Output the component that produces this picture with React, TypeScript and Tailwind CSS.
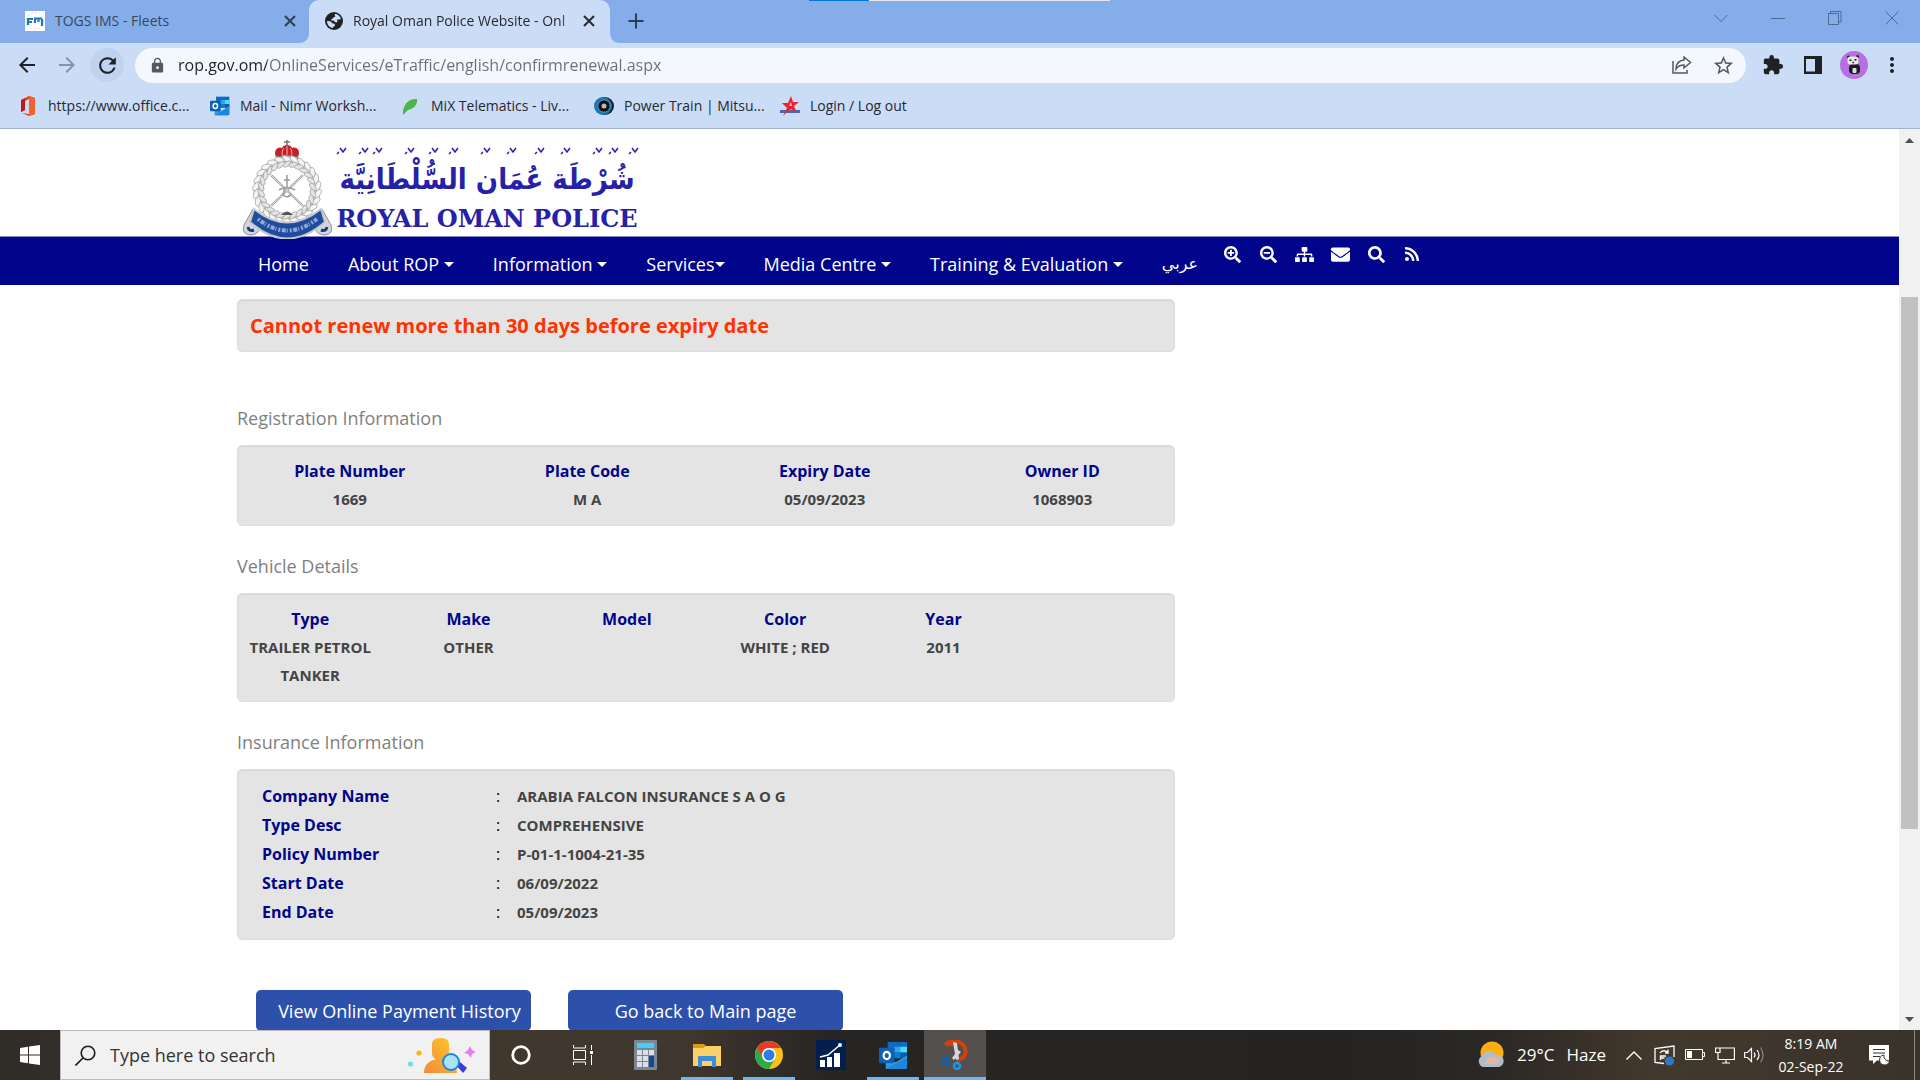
import type { ReactNode } from "react";
import {
  MdArrowBack,
  MdArrowForward,
  MdExtension,
  MdLock,
  MdMoreVert,
  MdRefresh,
  MdStarBorder,
} from "react-icons/md";
import { FaEnvelope, FaRss, FaSearch, FaSearchMinus, FaSearchPlus, FaSitemap } from "react-icons/fa";

const bookmarks = [
  { label: "https://www.office.c...", icon: <OfficeIcon />, width: "w-[192px]" },
  { label: "Mail - Nimr Worksh...", icon: <OutlookIcon size={20} />, width: "w-[191px]" },
  { label: "MiX Telematics - Liv...", icon: <LeafIcon />, width: "w-[193px]" },
  { label: "Power Train | Mitsu...", icon: <TyreIcon />, width: "w-[186px]" },
  { label: "Login / Log out", icon: <StarLogo />, width: "w-[150px]" },
];

const menu = [
  { label: "Home", caret: false },
  { label: "About ROP ", caret: true },
  { label: "Information ", caret: true },
  { label: "Services", caret: true },
  { label: "Media Centre ", caret: true },
  { label: "Training & Evaluation ", caret: true },
];

const tools = [
  { label: "Zoom in", icon: <FaSearchPlus size={17} /> },
  { label: "Zoom out", icon: <FaSearchMinus size={17} /> },
  { label: "Site map", icon: <FaSitemap size={19} /> },
  { label: "Contact", icon: <FaEnvelope size={19} /> },
  { label: "Search", icon: <FaSearch size={17} /> },
  { label: "RSS", icon: <FaRss size={16} /> },
];

const registration = [
  { label: "Plate Number", value: "1669" },
  { label: "Plate Code", value: "M A" },
  { label: "Expiry Date", value: "05/09/2023" },
  { label: "Owner ID", value: "1068903" },
];

const vehicle = [
  { label: "Type", value: "TRAILER PETROL TANKER" },
  { label: "Make", value: "OTHER" },
  { label: "Model", value: "" },
  { label: "Color", value: "WHITE ; RED" },
  { label: "Year", value: "2011" },
  { label: "", value: "" },
];

const insurance = [
  { label: "Company Name", value: "ARABIA FALCON INSURANCE S A O G" },
  { label: "Type Desc", value: "COMPREHENSIVE" },
  { label: "Policy Number", value: "P-01-1-1004-21-35" },
  { label: "Start Date", value: "06/09/2022" },
  { label: "End Date", value: "05/09/2023" },
];

export default function App() {
  return (
    <div className="flex h-screen flex-col overflow-hidden bg-white font-['Open_Sans','Noto_Sans',sans-serif]">
      <TabStrip />
      <Toolbar />
      <BookmarksBar />
      <div className="flex min-h-0 flex-1">
        <div className="min-w-0 flex-1 overflow-hidden">
          <SiteHeader />
          <RenewalPage />
        </div>
        <Scrollbar />
      </div>
      <Taskbar />
    </div>
  );
}

/* ---------- browser ---------- */

function TabStrip() {
  return (
    <header className="relative flex h-[43px] shrink-0 bg-[#85ade9]">
      <div className="flex w-[309px] items-center pb-[2px] pl-[25px] pr-3 text-sm text-[#35485f]">
        <FleetIcon />
        <span className="ml-[10px] flex-1">TOGS IMS - Fleets</span>
        <button aria-label="Close tab" className="text-[#2c3e55]">
          <CrossIcon />
        </button>
      </div>
      <div className="relative flex w-[301px] items-center rounded-t-[10px] bg-[#cbdcf6] pb-[2px] pl-4 pr-[14px] text-sm text-[#26292e]">
        <TabFoot className="absolute -left-[10px] bottom-0" />
        <TabFoot className="absolute -right-[10px] bottom-0 -scale-x-100" />
        <GlobeIcon />
        <span className="ml-[10px] min-w-0 flex-1 whitespace-nowrap mask-r-from-90%">
          Royal Oman Police Website - Onl
        </span>
        <button aria-label="Close tab">
          <CrossIcon />
        </button>
      </div>
      <button aria-label="New tab" className="ml-[18px] pb-[2px] text-[#2b3d54]">
        <svg width="16" height="16" viewBox="0 0 16 16" stroke="currentColor" strokeWidth="2">
          <path d="M8 0.5v15M0.5 8h15" />
        </svg>
      </button>
      <div className="absolute left-[809px] top-0 flex h-px w-[301px] bg-[#e6e6e6]">
        <div className="w-1/5 bg-[#0078d7]" />
      </div>
      <div className="ml-auto flex pb-[7px] text-[#4f6a93]">
        <WindowButton label="Search tabs"><path d="M0.5 4l6.500 6.500l6.500 -6.500" /></WindowButton>
        <WindowButton label="Minimize"><path d="M0 7.500h14" /></WindowButton>
        <WindowButton label="Restore"><path d="M0.500 2.500h10v11h-10zM2.500 2.500v-2h10.500v10.500h-2.500" /></WindowButton>
        <WindowButton label="Close"><path d="M0.500 0.500l13 13M13.500 0.500l-13 13" /></WindowButton>
      </div>
    </header>
  );
}

function WindowButton({ label, children }: { label: string; children: ReactNode }) {
  return (
    <button aria-label={label} className="flex w-[57px] items-center justify-center">
      <svg width="14" height="14" viewBox="0 0 14 14" fill="none" stroke="currentColor">
        {children}
      </svg>
    </button>
  );
}

function TabFoot({ className }: { className: string }) {
  return (
    <svg width="10" height="10" viewBox="0 0 10 10" fill="#cbdcf6" className={className}>
      <path d="M10 0v10H0C6 10 10 6 10 0z" />
    </svg>
  );
}

function CrossIcon() {
  return (
    <svg width="14" height="14" viewBox="0 0 14 14" stroke="currentColor" strokeWidth="2">
      <path d="M2 2l10 10M12 2L2 12" />
    </svg>
  );
}

function Toolbar() {
  return (
    <div className="flex h-[44px] shrink-0 items-center bg-[#cbdcf6] text-[#202124]">
      <button aria-label="Back" className="ml-[7px] flex w-10 justify-center">
        <MdArrowBack size={24} />
      </button>
      <button aria-label="Forward" className="flex w-10 justify-center text-[#8793a8]">
        <MdArrowForward size={24} />
      </button>
      <button
        aria-label="Reload"
        className="ml-[3px] flex size-[34px] items-center justify-center rounded-full bg-[#bfd2ef]"
      >
        <MdRefresh size={25} />
      </button>
      <div className="ml-[11px] flex h-[35px] flex-1 items-center rounded-full bg-[#f4f7fd] pl-[14px] pr-[11px] text-[#55585d]">
        <MdLock size={17} />
        <input
          aria-label="Address"
          defaultValue="rop.gov.om/OnlineServices/eTraffic/english/confirmrenewal.aspx"
          className="ml-3 min-w-0 flex-1 bg-[linear-gradient(to_right,#202124_89px,#6b6f75_89px)] bg-clip-text text-base text-transparent outline-none"
        />
        <button aria-label="Share" className="mr-5">
          <svg width="20" height="18" viewBox="0 0 20 18" fill="none" stroke="currentColor" strokeWidth="1.500">
            <path d="M1 5v12h14v-3" />
            <path d="M12 1l6.500 5.500L12 12V9c-4 0-6 1-8 4 0-5 3-8.500 8-9z" />
          </svg>
        </button>
        <button aria-label="Bookmark this page">
          <MdStarBorder size={23} />
        </button>
      </div>
      <button aria-label="Extensions" className="ml-[16px]">
        <MdExtension size={22} />
      </button>
      <button aria-label="Side panel" className="ml-[20px]">
        <svg width="18" height="18" viewBox="0 0 18 18">
          <path fill="currentColor" fillRule="evenodd" d="M0 0h18v18H0zM2 3v12.500h9V3z" />
        </svg>
      </button>
      <button aria-label="Profile" className="ml-[18px]">
        <PandaIcon />
      </button>
      <button aria-label="Menu" className="ml-3 mr-4">
        <MdMoreVert size={24} />
      </button>
    </div>
  );
}

function BookmarksBar() {
  return (
    <nav className="flex h-[42px] shrink-0 items-start border-b border-[#a3b2cf] bg-[#cbdcf6] pl-[18px] pt-[8px] text-sm text-[#26292e]">
      {bookmarks.map((b) => (
        <a key={b.label} href="#" className={`flex h-[22px] shrink-0 items-center gap-[10px] whitespace-nowrap ${b.width}`}>
          {b.icon}
          {b.label}
        </a>
      ))}
    </nav>
  );
}

function Scrollbar() {
  return (
    <div className="flex w-[21px] shrink-0 flex-col items-center bg-[#f1f1f1]">
      <svg width="21" height="21" viewBox="0 0 21 21" fill="#505050">
        <path d="M6 14l4.500-5 4.500 5z" />
      </svg>
      <div className="flex w-[17px] flex-1 flex-col">
        <div className="grow-[147]" />
        <div className="grow-[532] bg-[#c1c1c1]" />
        <div className="grow-[180]" />
      </div>
      <svg width="21" height="21" viewBox="0 0 21 21" fill="#505050">
        <path d="M6 8l4.500 5 4.500-5z" />
      </svg>
    </div>
  );
}

/* ---------- site ---------- */

function SiteHeader() {
  return (
    <header>
      <div className="h-[108px] border-b border-[#8587c4]">
        <div className="mx-auto flex max-w-[1425px] pl-[5px] pt-2">
          <Crest />
          <Wordmark />
        </div>
      </div>
      <div className="bg-[#00058b] text-white">
        <nav className="mx-auto flex h-[48px] max-w-[1425px] items-start pl-[21px]">
          <div className="flex gap-[39px] pt-[13px] text-lg leading-7">
            {menu.map((m) => (
              <button key={m.label} className="flex items-center whitespace-pre">
                {m.label}
                {m.caret && <Caret />}
              </button>
            ))}
            <a href="#" lang="ar" className="font-['DejaVu_Sans',sans-serif] text-base leading-7">
              عربي
            </a>
          </div>
          <div className="ml-4 flex pt-[7px]">
            {tools.map((t) => (
              <button key={t.label} aria-label={t.label} className="flex h-5 w-[36px] items-center justify-center">
                {t.icon}
              </button>
            ))}
          </div>
        </nav>
      </div>
    </header>
  );
}

function Caret() {
  return (
    <svg width="10" height="5" viewBox="0 0 10 5" fill="currentColor">
      <path d="M0 0h10L5 5z" />
    </svg>
  );
}

function RenewalPage() {
  return (
    <main className="mx-auto max-w-[1425px] pt-[14px]">
      <div className="w-2/3 pr-3">
        <Panel>
          <p role="alert" className="px-3 py-[11px] text-xl leading-[29px] font-bold text-[#ff3300]">
            Cannot renew more than 30 days before expiry date
          </p>
        </Panel>
        <div className="h-[26px]" />

        <Heading>Registration Information</Heading>
        <Panel>
          <FieldTable fields={registration} />
        </Panel>

        <Heading>Vehicle Details</Heading>
        <Panel>
          <FieldTable fields={vehicle} />
        </Panel>

        <Heading>Insurance Information</Heading>
        <Panel>
          <table className="mt-[11px] mb-[13px] ml-6 text-left">
            <tbody>
              {insurance.map((row) => (
                <tr key={row.label} className="h-[29px]">
                  <th scope="row" className="w-[234px] text-base leading-7 font-bold text-[#00058b]">{row.label}</th>
                  <td className="w-[21px] text-base leading-7">:</td>
                  <td className="text-[15px] leading-7 font-bold text-[#444]">{row.value}</td>
                </tr>
              ))}
            </tbody>
          </table>
        </Panel>

        <div className="mt-[50px] flex gap-[37px] pl-[19px]">
          <button className="h-[41px] w-[275px] rounded-[5px] bg-[#2d51aa] pl-3 text-lg text-white">
            View Online Payment History
          </button>
          <button className="h-[41px] w-[275px] rounded-[5px] bg-[#2d51aa] text-lg text-white">
            Go back to Main page
          </button>
        </div>
      </div>
    </main>
  );
}

function Panel({ children }: { children: ReactNode }) {
  return (
    <section className="rounded-[5px] border border-[#dedede] bg-[#e4e4e4] shadow-[inset_0_1px_2px_rgba(0,0,0,0.06)]">
      {children}
    </section>
  );
}

function Heading({ children }: { children: ReactNode }) {
  return <h2 className="pt-[26px] pb-[13px] text-lg leading-7 text-[#7f7f7f]">{children}</h2>;
}

function FieldTable({ fields }: { fields: { label: string; value: string }[] }) {
  return (
    <div className="-mx-[7px]">
      <table className="mt-[11px] mb-3 w-full table-fixed text-center">
        <thead>
          <tr>
            {fields.map((f) => (
              <th key={f.label} className="text-base leading-7 font-bold text-[#00058b]">{f.label}</th>
            ))}
          </tr>
        </thead>
        <tbody>
          <tr>
            {fields.map((f) => (
              <td key={f.label} className="px-3 align-top text-[15px] leading-7 font-bold text-[#444]">{f.value}</td>
            ))}
          </tr>
        </tbody>
      </table>
    </div>
  );
}

function Crest() {
  const leaves = Array.from({ length: 26 }, (_, i) => i * (360 / 26));
  return (
    <svg width="92" height="102" viewBox="0 0 92 102" className="relative -mb-[3px] shrink-0">
      {/* crown */}
      <path d="M45 3v6M42 5h6" stroke="#777" strokeWidth="1.500" />
      <path d="M34 20c-3-7 2-11 6-9 1-4 9-4 10 0 5-2 9 3 6 9z" fill="#c8202a" />
      <path d="M41 20c-2-5 0-8 1-9M49 20c2-5 0-8-1-9M45 9v11" stroke="#f3b3b3" fill="none" />
      <path d="M34 20q11-3 22 0v4q-11-3-22 0z" fill="#c9c9c9" stroke="#777" />
      {/* wreath */}
      <circle cx="45" cy="53" r="29" fill="none" stroke="#c6c6c6" strokeWidth="9" />
      {leaves.map((a) => (
        <g key={a} transform={`rotate(${a} 45 53)`}>
          <ellipse cx="45" cy="22" rx="5" ry="2.500" fill="#f5f5f5" stroke="#a2a2a2" strokeWidth="0.700" transform="rotate(28 45 22)" />
          <ellipse cx="45" cy="27" rx="4.500" ry="2.300" fill="#e4e4e4" stroke="#9c9c9c" strokeWidth="0.700" transform="rotate(-28 45 27)" />
        </g>
      ))}
      {/* crossed swords and khanjar */}
      <path d="M29 38l32 31M61 38L29 69" stroke="#999" strokeWidth="2.200" />
      <path d="M29 38l32 31M61 38L29 69" stroke="#eee" strokeWidth="0.900" />
      <path d="M45 38v12M42 43h6M37 53q8-5 16 0M43 50l-2 8q5 4 8-1" stroke="#999" strokeWidth="1.500" fill="none" />
      <path d="M39 78q6-7 12 0z" fill="#555" />
      {/* ribbon */}
      <path d="M11 72L2 88q-3 9 6 10 8 0 10-7M80 72l9 16q3 9-6 10-8 0-10-7" fill="#d4d6da" stroke="#8b8f96" />
      <path d="M12 72q33 27 67 0l4 13q-38 33-75 0z" fill="#1f4c9c" stroke="#c5c8ce" strokeWidth="2" />
      <path d="M16 82q29 23 59 0" fill="none" stroke="#8fa9d6" strokeWidth="4" strokeDasharray="2 1.500 4 1 1 2" />
      <path d="M6 90q1 5 6 3M85 90q-1 5-6 3" stroke="#1b3c80" strokeWidth="3" fill="none" />
    </svg>
  );
}

function Wordmark() {
  return (
    <svg width="310" height="96" viewBox="0 0 310 96" fill="#2521a8" className="shrink-0">
      <text
        x="153"
        y="52"
        textAnchor="middle"
        direction="rtl"
        className="font-['DejaVu_Sans_Condensed','DejaVu_Sans',sans-serif] text-[29px] font-bold"
      >
        شُرْطَة عُمَان السُّلْطَانِيَّة
      </text>
      {/* calligraphic ornaments above the letters */}
      <g fill="none" stroke="#2521a8" strokeWidth="1.500">
        {[6, 28, 42, 74, 98, 118, 150, 176, 204, 230, 262, 278, 298].map((x) => (
          <path key={x} d={`M${x} 11l3 4 3-4M${x - 3} 17l2-2`} />
        ))}
      </g>
      <text x="153" y="90" textAnchor="middle" className="font-['DejaVu_Serif',serif] text-[24px] font-bold">
        ROYAL OMAN POLICE
      </text>
    </svg>
  );
}

/* ---------- taskbar ---------- */

function Taskbar() {
  return (
    <footer className="flex h-[50px] shrink-0 bg-[linear-gradient(to_right,#302c28_0%,#40372d_26%,#3f362d_36%,#272524_43%,#252423_70%,#2b2825_78%,#43382d_86%,#39332c_100%)] text-white">
      <button aria-label="Start" className="flex w-[60px] items-center justify-center">
        <svg width="20" height="20" viewBox="0 0 20 20" fill="#fff">
          <path d="M0 3l8-1.200V9.500H0zM9 1.600L20 0v9.500H9zM0 10.500h8v7.700L0 17zM9 10.500h11V20L9 18.400z" />
        </svg>
      </button>
      <label className="flex w-[430px] items-center border border-[#bcbcbc] bg-[#f1f1f1] pl-[14px] pr-[14px] text-[#1f1f1f]">
        <svg width="21" height="21" viewBox="0 0 21 21" fill="none" stroke="#1a1a1a" strokeWidth="1.600">
          <circle cx="13" cy="8" r="6.800" />
          <path d="M8 13l-7.500 7.500" />
        </svg>
        <input
          aria-label="Search Windows"
          placeholder="Type here to search"
          className="ml-[14px] min-w-0 flex-1 bg-transparent text-lg outline-none placeholder:text-[#333]"
        />
        <SearchHighlight />
      </label>
      <TaskButton label="Cortana">
        <svg width="20" height="20" viewBox="0 0 20 20" fill="none" stroke="#fff" strokeWidth="2.800">
          <circle cx="10" cy="10" r="8.300" />
        </svg>
      </TaskButton>
      <TaskButton label="Task View">
        <svg width="20" height="20" viewBox="0 0 20 20" fill="none" stroke="#fff">
          <path d="M0.500 5.500h12v9h-12zM0.500 0v3h12V0M0.500 20v-3h12v3M18.500 0v5M18.500 10v10" />
          <path d="M17 6h3v3h-3z" fill="#fff" stroke="none" />
        </svg>
      </TaskButton>
      <TaskButton label="Calculator"><CalculatorIcon /></TaskButton>
      <TaskButton label="File Explorer" open><FolderIcon /></TaskButton>
      <TaskButton label="Chrome" open><ChromeIcon /></TaskButton>
      <TaskButton label="Reports"><ChartIcon /></TaskButton>
      <TaskButton label="Outlook" open><OutlookIcon size={29} /></TaskButton>
      <TaskButton label="Snipping Tool" open active><SnipIcon /></TaskButton>
      <Tray />
    </footer>
  );
}

function TaskButton({ label, open, active, children }: { label: string; open?: boolean; active?: boolean; children: ReactNode }) {
  return (
    <button
      aria-label={label}
      className={`relative flex w-[62px] items-center justify-center ${active ? "bg-[#53504d]" : ""}`}
    >
      {children}
      {open && <span className={`absolute bottom-0 h-[3px] bg-[#76b3ec] ${active ? "inset-x-0" : "inset-x-[5px]"}`} />}
    </button>
  );
}

function Tray() {
  return (
    <div className="ml-auto flex items-center">
      <button className="flex items-center gap-3 text-[17px]">
        <svg width="28" height="28" viewBox="0 0 28 28">
          <circle cx="15" cy="12" r="11.500" fill="#fcae12" />
          <path d="M6 26a6 6 0 0 1-1-11 8 8 0 0 1 14-1 6 6 0 0 1 3 12z" fill="#aebccb" />
          <path d="M8 22a8 8 0 0 1 15-2l-3 3H9z" fill="#e6b79a" />
        </svg>
        <span className="whitespace-pre">29°C</span>
        <span>Haze</span>
      </button>
      <button aria-label="Show hidden icons" className="ml-[20px]">
        <svg width="16" height="9" viewBox="0 0 16 9" fill="none" stroke="#fff" strokeWidth="1.400">
          <path d="M0.500 8.500L8 1l7.500 7.500" />
        </svg>
      </button>
      <button aria-label="Updates" className="ml-[12px]">
        <svg width="21" height="21" viewBox="0 0 21 21" fill="none" stroke="#fff" strokeWidth="1.300">
          <path d="M20 12V1L1 3.500v14L10 18.500" />
          <path d="M6 8c2-3 6-3 8 0M14 4.500V8h-3M12 11H6.500v4M6.500 13h4" />
          <circle cx="15.500" cy="16" r="4.500" fill="#2f78c8" stroke="none" />
        </svg>
      </button>
      <button aria-label="Battery" className="ml-[10px]">
        <svg width="20" height="12" viewBox="0 0 20 12" fill="none" stroke="#fff">
          <path d="M0.500 0.500h17v10h-17zM17.500 3.500h2v4h-2" />
          <path d="M2 2h5v7H2z" fill="#fff" stroke="none" />
        </svg>
      </button>
      <button aria-label="Network" className="ml-[10px]">
        <svg width="20" height="17" viewBox="0 0 20 17" fill="none" stroke="#fff" strokeWidth="1.200">
          <path d="M5 1h14.400v11.500H3V7M11 12.500v3.500M7 16h8M0.500 1h4.500v4.500h-4.500zM3 5.500v3" />
        </svg>
      </button>
      <button aria-label="Volume" className="ml-[9px]">
        <svg width="21" height="18" viewBox="0 0 21 18" fill="none" stroke="#fff" strokeWidth="1.200">
          <path d="M0.700 6.500h2.800L7.500 2.500v13L3.500 11.500H0.700zM10 6.500q2 2.500 0 5M13 4q4 5 0 10" />
          <path d="M16.500 1.500q5 7.500 0 15" stroke="#8a857f" />
        </svg>
      </button>
      <button className="ml-[9px] w-[74px] text-center text-sm leading-[23px] whitespace-nowrap">
        8:19 AM
        <br />
        02-Sep-22
      </button>
      <button aria-label="Notifications" className="ml-[21px]">
        <svg width="21" height="20" viewBox="0 0 21 20">
          <path d="M0 0h20v15.500H8L4 19v-3.500H0z" fill="#fff" />
          <path d="M4 4.500h12M4 8h12M4 11.500h7" stroke="#3a332c" strokeWidth="1.200" />
          <path d="M15 10a5 5 0 1 0 5.500 6A5 5 0 0 1 15 10z" fill="#fff" stroke="#3a332c" />
        </svg>
      </button>
      <div className="ml-[24px] mr-[5px] h-[50px] w-px bg-[#8b8781]" />
    </div>
  );
}

/* ---------- icons ---------- */

function FleetIcon() {
  return (
    <svg width="20" height="20" viewBox="0 0 20 20">
      <path fill="#fff" d="M0 0h20v20H0z" />
      <circle cx="10" cy="10" r="8.500" fill="none" stroke="#d5dce2" strokeDasharray="2 2" />
      <path d="M3 14V8h5M3 11h4M10 12V7.500h7M13.500 8v3M17 8v7" fill="none" stroke="#1d7bbd" strokeWidth="2.200" />
    </svg>
  );
}

function GlobeIcon() {
  return (
    <svg width="18" height="18" viewBox="0 0 18 18" className="shrink-0">
      <circle cx="9" cy="9" r="9" fill="#202124" />
      <path d="M10 2c3 0 5 2 6 5-2 1-4 0-4 1s1 1 0 2-2 0-3-1-3 0-3-1 2-1 2-2 1-1 2-1-1-2 0-3zM2 9c2 0 4 0 5 2 1 1 3 0 3 2s-2 1-2 3c-3 0-6-3-6-7z" fill="#cbdcf6" />
    </svg>
  );
}

function PandaIcon() {
  return (
    <svg width="28" height="28" viewBox="0 0 28 28">
      <circle cx="14" cy="14" r="14" fill="#b86fe3" />
      <circle cx="8.500" cy="6" r="1.500" fill="#222" />
      <circle cx="17.500" cy="5.500" r="1.500" fill="#222" />
      <rect x="9" y="13" width="11" height="10" rx="4" fill="#1c1c1c" />
      <rect x="12.500" y="17" width="4" height="5" rx="1" fill="#ddd" />
      <rect x="7.500" y="5.500" width="11" height="8" rx="3" fill="#e9e9e2" />
      <path d="M9.500 9l2 .5M14.500 9l2-.5M12.500 11.500h1.500" stroke="#222" strokeWidth="1.300" />
    </svg>
  );
}

function OfficeIcon() {
  return (
    <svg width="20" height="20" viewBox="0 0 20 20">
      <path d="M11 0l6 2v16l-6 2-7-3 7 1V3L7 5v9l-4 2V4z" fill="#e2401b" />
      <path d="M11 0l6 2v16l-6 2z" fill="#f0642c" />
      <path d="M3 4l4-1.500V14l-4 2z" fill="#c4161f" />
    </svg>
  );
}

function OutlookIcon({ size }: { size: number }) {
  return (
    <svg width={size} height={size} viewBox="0 0 30 30">
      <path d="M9 1h20v16H9z" fill="#0f6cbd" />
      <path d="M16 6h6v6h-6z" fill="#28a8ea" />
      <path d="M22 6h7v6h-7z" fill="#50d9ff" />
      <path d="M9 12h7v6H9zM22 12h7v6h-7z" fill="#0a5ca8" />
      <path d="M16 12h6v6h-6z" fill="#0f7bd0" />
      <path d="M29 15v12a2 2 0 0 1-2 2H7V17l10 5z" fill="#2b9ce8" />
      <path d="M7 29l22-12v10a2 2 0 0 1-2 2z" fill="#1b86da" />
      <rect y="7" width="16" height="16" rx="1.500" fill="#0e62b5" />
      <ellipse cx="8" cy="15" rx="3.300" ry="3.800" fill="none" stroke="#fff" strokeWidth="2.200" />
    </svg>
  );
}

function LeafIcon() {
  return (
    <svg width="20" height="20" viewBox="0 0 20 20">
      <path d="M2 19C1 10 7 2 16 3c1 6-4 10-9 11z" fill="#4cb648" />
    </svg>
  );
}

function TyreIcon() {
  return (
    <svg width="20" height="20" viewBox="0 0 20 20">
      <circle cx="11" cy="10" r="9" fill="#15202b" />
      <circle cx="9" cy="10" r="9" fill="#1578b8" />
      <circle cx="10" cy="10" r="6" fill="#111" stroke="#9cc4dd" strokeDasharray="1 1" />
      <circle cx="10" cy="10" r="2.500" fill="#b9b9b9" />
    </svg>
  );
}

function StarLogo() {
  return (
    <svg width="20" height="20" viewBox="0 0 20 20">
      <path d="M0 14h20v3H0z" fill="#3d70b8" />
      <path d="M11 0l2 6h6l-5 4 3 7-6-4-4 3-4 4 4-8-5-5h6z" fill="#ee2130" />
      <path d="M11 6l-2 4h3z" fill="#fbb" />
    </svg>
  );
}

function SearchHighlight() {
  return (
    <svg width="68" height="36" viewBox="0 0 68 36">
      <defs>
        <linearGradient id="person" x1="0" x2="1" y1="1" y2="0">
          <stop offset="0" stopColor="#f08a3c" />
          <stop offset="1" stopColor="#ffc928" />
        </linearGradient>
      </defs>
      <circle cx="12" cy="16" r="2.600" fill="#ffb30f" />
      <circle cx="3.500" cy="27" r="2.600" fill="#6fdcea" />
      <path d="M25 7q0-6 8.500-6T42 7v9q0 5-4 6 12 3 12 14H17q0-11 12-14-4-1-4-6z" fill="url(#person)" />
      <path d="M49 28l4-3 7 6-4 5z" fill="#3d3ccf" />
      <circle cx="44" cy="25" r="8" fill="#a9e4f7" stroke="#2185df" strokeWidth="2" />
      <path d="M63 9l2 4 4 2-4 2-1 4-3-4-4-1 4-3z" fill="#e17df5" />
    </svg>
  );
}

function CalculatorIcon() {
  const keys = [0, 1, 2].flatMap((r) => [0, 1, 2].map((c) => ({ r, c })));
  return (
    <svg width="23" height="30" viewBox="0 0 23 30">
      <rect width="23" height="30" rx="1" fill="#7b8794" />
      <path d="M3 3h17v5H3z" fill="#3fd2f7" />
      {keys.map(({ r, c }) => (
        <rect key={`${r}${c}`} x={3 + c * 6} y={10 + r * 6} width="5" height="5" fill="#dcdfe3" />
      ))}
      <path d="M15 16h5v11h-5z" fill="#0f4b91" />
    </svg>
  );
}

function FolderIcon() {
  return (
    <svg width="28" height="24" viewBox="0 0 28 24">
      <path d="M0 1h11l2 2v3H0z" fill="#dd9a0c" />
      <path d="M0 5h10l3-2h15v20H0z" fill="#fcd267" />
      <path d="M5 24V14q0-1 1-1h16q1 0 1 1v10h-4v-6H9v6z" fill="#3a8fd8" />
    </svg>
  );
}

function ChromeIcon() {
  return (
    <svg width="28" height="28" viewBox="0 0 28 28">
      <circle cx="14" cy="14" r="14" fill="#fbc116" />
      <path d="M1.900 7A14 14 0 0 1 26.100 7H14a7 7 0 0 0-6.100 10.500z" fill="#e33b2e" />
      <path d="M1.900 7A14 14 0 0 0 14 28l6.100-10.500a7 7 0 0 1-12.200 0z" fill="#2da94f" />
      <circle cx="14" cy="14" r="7" fill="#fff" />
      <circle cx="14" cy="14" r="5.500" fill="#2f7bee" />
    </svg>
  );
}

function ChartIcon() {
  return (
    <svg width="30" height="30" viewBox="0 0 30 30">
      <path d="M0 0h30v30H0z" fill="#02204f" />
      <path d="M4 20h5v7H4zM11 17h5v10h-5zM18 13h6v14h-6z" fill="#fff" />
      <path d="M4 17l8-2 12-10" fill="none" stroke="#fff" strokeWidth="1.500" />
      <circle cx="24" cy="5" r="2" fill="#fff" />
    </svg>
  );
}

function SnipIcon() {
  return (
    <svg width="28" height="30" viewBox="0 0 28 30">
      <path d="M4 5c5-5 15-5 19 1 4 7 0 13-7 14M4 5c4-2 8-1 10 0" fill="none" stroke="#d6400f" strokeWidth="4" />
      <path d="M12 2l4 1 2 16-3 1zM20 12l-7 8-2-2 6-8z" fill="#d8d8d8" />
      <circle cx="5" cy="21" r="3.300" fill="none" stroke="#0d63b5" strokeWidth="2.600" />
      <circle cx="16" cy="26" r="3" fill="none" stroke="#1e96e8" strokeWidth="2.600" />
    </svg>
  );
}
